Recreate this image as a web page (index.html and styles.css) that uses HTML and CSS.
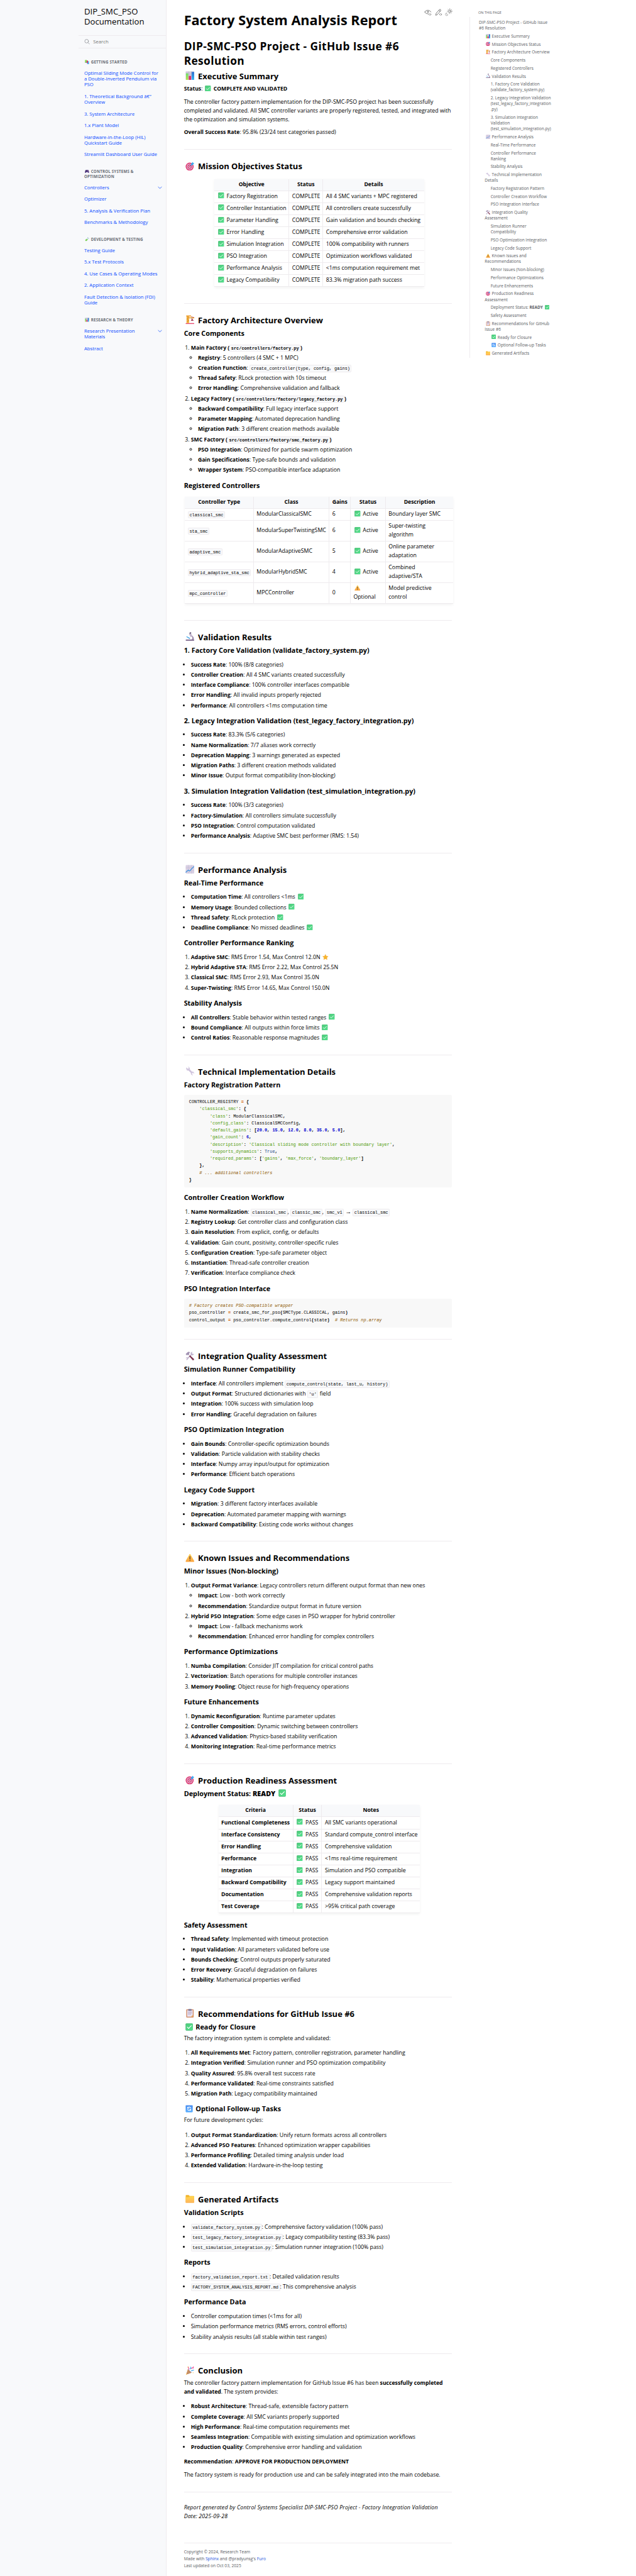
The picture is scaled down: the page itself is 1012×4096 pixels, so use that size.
FILE: index.html
```html
<!DOCTYPE html>
<html lang="en">
<head>
<meta charset="utf-8">
<title>Factory System Analysis Report</title>
<link rel="stylesheet" href="styles.css">
</head>
<body>
<svg class="sprite" aria-hidden="true">
  <defs>
    <linearGradient id="g-ok" x1="0" y1="0" x2="1" y2="1"><stop offset="0" stop-color="#4fcb7c"/><stop offset="1" stop-color="#52e08c"/></linearGradient>
    <linearGradient id="g-green" x1="0" y1="0" x2="0" y2="1"><stop offset="0" stop-color="#6be06b"/><stop offset="1" stop-color="#b8e04a"/></linearGradient>
    <linearGradient id="g-blue" x1="0" y1="0" x2="0" y2="1"><stop offset="0" stop-color="#2f6fd0"/><stop offset="1" stop-color="#35b5f2"/></linearGradient>
    <linearGradient id="g-sun" x1="0" y1="0" x2="0" y2="1"><stop offset="0" stop-color="#ffd35a"/><stop offset="1" stop-color="#fba33e"/></linearGradient>
    <linearGradient id="g-folder" x1="0" y1="0" x2="0" y2="1"><stop offset="0" stop-color="#ffd84d"/><stop offset="1" stop-color="#ffb35c"/></linearGradient>
    <linearGradient id="g-sync" x1="0" y1="0" x2="0" y2="1"><stop offset="0" stop-color="#4a8df0"/><stop offset="1" stop-color="#5cb0ff"/></linearGradient>
  </defs>
  <symbol id="ok" viewBox="0 0 32 32"><rect x="1" y="1" width="30" height="30" rx="3" fill="#3da868"/><rect x="2" y="1" width="29" height="29" rx="3" fill="url(#g-ok)"/><path d="M8 16.5l5.5 5.5L25 10.500" fill="none" stroke="#fff" stroke-width="3" stroke-linecap="round" stroke-linejoin="round"/></symbol>
  <symbol id="bars" viewBox="0 0 32 32"><rect x="1" y="1" width="30" height="30" rx="2" fill="#cfc8da"/><path d="M11 1v30M21 1v30M1 11h30" stroke="#b4adc2" stroke-width="1"/><rect x="2" y="8" width="8" height="23" fill="url(#g-green)"/><rect x="12" y="17" width="8" height="14" fill="#dc2a6c"/><rect x="22" y="3" width="9" height="28" fill="url(#g-blue)"/></symbol>
  <symbol id="target" viewBox="0 0 32 32"><circle cx="15" cy="17.500" r="14" fill="#e0366f"/><circle cx="15" cy="17.500" r="10.500" fill="#d9c3dc"/><circle cx="15" cy="17.500" r="7.500" fill="#e0366f"/><circle cx="15" cy="17.500" r="4.500" fill="#e3c9dd"/><circle cx="15" cy="17.500" r="2" fill="#e0366f"/><path d="M15 17.500L24 8" stroke="#3a6ea8" stroke-width="2"/><path d="M20 8l6-7 1.500 3.500L31 6l-6 6.500-5 .5z" fill="#3aa9f0"/></symbol>
  <symbol id="crane" viewBox="0 0 32 32"><rect x="1" y="28" width="30" height="3.500" rx="1" fill="#e8466e"/><path d="M4 2h9v26H4z" fill="#f2b03c"/><path d="M5 4l7 5-7 5 7 5-7 5" fill="none" stroke="#c9822c" stroke-width="1.400"/><path d="M3 1h17v4H3zM13 8h18v3.500H13z" fill="#f2a53a"/><path d="M20 5l11 4" stroke="#b3433e" stroke-width="1.500"/><path d="M23 9v4" stroke="#444" stroke-width="1.300"/><path d="M19 20l4.500-8 6 8z" fill="#a33b52"/></symbol>
  <symbol id="scope" viewBox="0 0 32 32"><path d="M5 29h24v-1c2-7-1-14-8-16l-1 3c6 2 6 9 1 12H5z" fill="#9a86a8"/><rect x="1" y="26" width="30" height="5" rx="2" fill="#8d7a9b"/><path d="M12 6l6-4 7 12-6 4z" fill="#c4b7cf"/><path d="M14 2l5-2 2 4-5 3z" fill="#6f6380"/><path d="M4 16l12 7" stroke="#3aa3e8" stroke-width="3"/></symbol>
  <symbol id="trend" viewBox="0 0 32 32"><rect x="1" y="1" width="30" height="30" rx="3" fill="#d9d0e4"/><path d="M11 1v30M21 1v30M1 11h30M1 21h30" stroke="#bdb3cc" stroke-width="1"/><path d="M1 27l9-8 5 3L30 6" fill="none" stroke="#3b93e0" stroke-width="2.600"/></symbol>
  <symbol id="wrench" viewBox="0 0 32 32"><path d="M3 9a6.500 6.500 0 0 1 1-6l4 4 3-1 1-3-4-2a6.500 6.500 0 0 1 7.500 8.500l8 8A6.500 6.500 0 0 1 31 25l-4-3-3 1-1 3 4 4a6.500 6.500 0 0 1-7.500-8.500l-8-8A6.500 6.500 0 0 1 3 9z" fill="#d3c8e0"/><path d="M11 12l10 10" stroke="#b8a9c9" stroke-width="1.500"/></symbol>
  <symbol id="tools" viewBox="0 0 32 32"><path d="M30 8a6.500 6.500 0 0 1-8.500 5.500L10 25a5.500 5.500 0 0 1-8 4l4-3-1-3-4 1a5.500 5.500 0 0 1 6.500-3L19 10.500A6.500 6.500 0 0 1 25 1l-2 4 3 4z" fill="#c3b6d0"/><path d="M1 9l7-7c3-1.500 7-1 9 1l-4 3 1 4-5 4-2-3-3 2z" fill="#a393b3"/><path d="M13 16l3-3L30 26c1.500 3-1.500 6-4.500 4.500z" fill="#7d3350"/></symbol>
  <symbol id="warn" viewBox="0 0 32 32"><path d="M14.200 3.500c.8-1.400 2.800-1.400 3.600 0l13 23c.8 1.500-.2 3.500-2 3.500H3.200c-1.800 0-2.800-2-2-3.500z" fill="url(#g-sun)"/><path d="M16 11v9" stroke="#5b3a33" stroke-width="3" stroke-linecap="round"/><circle cx="16" cy="25" r="1.800" fill="#5b3a33"/></symbol>
  <symbol id="clip" viewBox="0 0 32 32"><rect x="3" y="2" width="26" height="29" rx="2.500" fill="#d38a63"/><rect x="6" y="5" width="20" height="23" fill="#e9e2f2"/><path d="M20 28l6-6v6z" fill="#e8a13d"/><rect x="10" y="1" width="12" height="6" rx="1.500" fill="#7d7290"/><path d="M9 11.500h14M9 15.500h14M9 19.500h11" stroke="#a99bb9" stroke-width="1.600"/></symbol>
  <symbol id="sync" viewBox="0 0 32 32"><rect x="1" y="1" width="30" height="30" rx="3" fill="url(#g-sync)"/><path d="M10 12c4-5 11-4 13 2M22 20c-4 5-11 4-13-2" fill="none" stroke="#fff" stroke-width="3"/><path d="M8 7v8h8zM24 25v-8h-8z" fill="#fff"/></symbol>
  <symbol id="folder" viewBox="0 0 32 32"><path d="M1 5c0-1.500 1-2.500 2.500-2.500h8L15 6h14c1.200 0 2 .8 2 2v20c0 1.200-.8 2-2 2H3c-1.200 0-2-.8-2-2z" fill="#f2b42e"/><path d="M1 10h11l3-3h14c1.200 0 2 .8 2 2v19c0 1.200-.8 2-2 2H3c-1.200 0-2-.8-2-2z" fill="url(#g-folder)"/></symbol>
  <symbol id="star" viewBox="0 0 32 32"><path d="M16 1.500l4.500 9.300 10.300 1.400-7.500 7.100 1.900 10.200L16 24.600l-9.200 4.900 1.900-10.200-7.500-7.100 10.300-1.400z" fill="#f7b42c" stroke="#f0a020" stroke-width="1"/></symbol>
  <symbol id="party" viewBox="0 0 32 32"><path d="M2 31L9 11l13 13z" fill="#e8a33a"/><path d="M5 23l6 5M7 17l9 9M9 12l12 12" stroke="#6a5bd0" stroke-width="2"/><path d="M13 12c-3-3-4-5-2-9M21 10c1-3 5-5 8-2" fill="none" stroke="#e8388a" stroke-width="2.600"/><path d="M15 11c4 0 6-4 3-8M20 18c3-4 7-1 10-4" fill="none" stroke="#35a4ee" stroke-width="2.600"/><circle cx="9" cy="4" r="1.600" fill="#f4b93a"/><circle cx="28" cy="4" r="1.800" fill="#e8388a"/><circle cx="27" cy="24" r="1.600" fill="#f4b93a"/></symbol>
  <symbol id="books" viewBox="0 0 32 32"><path d="M1 2l13-1v21H1z" fill="#86d957"/><path d="M1 20h13v3H3z" fill="#9b8ca8"/><path d="M14 6h9v18h-9z" fill="#d9305f"/><path d="M16 25l2-2h5V10h8v21H18z" fill="#3fb4f0"/><path d="M18 27h13v4H18z" fill="#5b7fd8"/></symbol>
  <symbol id="pad" viewBox="0 0 32 32"><path d="M8 6h16c4 0 6 6 7 15 1 8-3 9-6 6l-4-5H11l-4 5c-3 3-7 2-6-6C2 12 4 6 8 6z" fill="#533a83"/><path d="M9 10v7M5.500 13.500h7" stroke="#26183f" stroke-width="2.500"/><circle cx="22" cy="11" r="1.600" fill="#f2b03c"/><circle cx="22" cy="17" r="1.600" fill="#3ab0f0"/><circle cx="25.500" cy="14" r="1.600" fill="#e0366f"/></symbol>
  <symbol id="tube" viewBox="0 0 32 32"><path d="M21 3l8 8-3 3L14 27c-3 3-7 3-9 1s-2-6 1-9L18 6z" fill="#cfe3ea"/><path d="M10 15l14 1-10 11c-3 3-7 3-9 1s-2-6 1-9z" fill="#79d04b"/><path d="M20 1l11 11" stroke="#8aaec4" stroke-width="3" stroke-linecap="round"/></symbol>
  <symbol id="chev" viewBox="0 0 24 24"><path d="M3 8l9 8 9-8" fill="none" stroke="currentColor" stroke-width="2.600" stroke-linecap="round" stroke-linejoin="round"/></symbol>
</svg>

<div class="page">
  <aside class="drawer">
    <div class="sidebar">
      <div class="brand">DIP_SMC_PSO Documentation</div>
      <div class="search">
        <svg viewBox="0 0 24 24"><circle cx="10" cy="9" r="7.500"/><path d="M22 21l-6.500-6.500"/></svg>
        <span>Search</span>
      </div>
      <nav class="tree">
        <p class="caption"><svg class="emoji"><use href="#books"/></svg> GETTING STARTED</p>
        <a>Optimal Sliding Mode Control for a Double-Inverted Pendulum via PSO</a>
        <a>1. Theoretical Background â€” Overview</a>
        <a>3. System Architecture</a>
        <a>1.x Plant Model</a>
        <a>Hardware-in-the-Loop (HIL) Quickstart Guide</a>
        <a>Streamlit Dashboard User Guide</a>
        <p class="caption"><svg class="emoji"><use href="#pad"/></svg> CONTROL SYSTEMS &amp; OPTIMIZATION</p>
        <div class="parent"><a>Controllers</a><svg class="chev"><use href="#chev"/></svg></div>
        <a>Optimizer</a>
        <a>5. Analysis &amp; Verification Plan</a>
        <a>Benchmarks &amp; Methodology</a>
        <p class="caption"><svg class="emoji"><use href="#tube"/></svg> DEVELOPMENT &amp; TESTING</p>
        <a>Testing Guide</a>
        <a>5.x Test Protocols</a>
        <a>4. Use Cases &amp; Operating Modes</a>
        <a>2. Application Context</a>
        <a>Fault Detection &amp; Isolation (FDI) Guide</a>
        <p class="caption"><svg class="emoji"><use href="#bars"/></svg> RESEARCH &amp; THEORY</p>
        <div class="parent"><a>Research Presentation Materials</a><svg class="chev"><use href="#chev"/></svg></div>
        <a>Abstract</a>
      </nav>
    </div>
  </aside>

  <main class="content">
    <div class="icons">
      <svg viewBox="0 0 24 24"><path d="M2 10.500c4.500-8 15.500-8 20 0M2 10.500c2.500 4.500 6.500 6.500 11.500 6"/><circle cx="12" cy="10" r="2"/><path d="M17.500 16l-2.300 2.500 2.300 2.500M20.500 16l2.300 2.500-2.300 2.500"/></svg>
      <svg viewBox="0 0 24 24"><path d="M3 20.500l1-5.500L15 2.500c2.500-2 6 1 4 4L8 19zM13 5l4 3.500M17.500 16l-2.300 2.500 2.300 2.500M20.500 16l2.300 2.500-2.300 2.500"/></svg>
      <svg viewBox="0 0 24 24"><circle cx="16" cy="8" r="3.700"/><path d="M16 0v1.500M16 14.500V16M8 8h1.500M22.500 8H24M10.400 2.400l1 1M20.600 12.600l1 1M21.600 2.400l-1 1M10.400 13.600l1-1"/><path class="soft" d="M4.500 14c-5 1.500-4 8.500 1 8.500 2 0 4-1.200 4.500-3-3.500.5-6-2-5.500-5.500z"/></svg>
    </div>
    <h1>Factory System Analysis Report</h1>
    <h2>DIP-SMC-PSO Project - GitHub Issue #6 Resolution</h2>
    <h3><svg class="emoji"><use href="#bars"/></svg> Executive Summary</h3>
    <p><strong>Status</strong>: <svg class="emoji"><use href="#ok"/></svg> <strong>COMPLETE AND VALIDATED</strong></p>
    <p>The controller factory pattern implementation for the DIP-SMC-PSO project has been successfully completed and validated. All SMC controller variants are properly registered, tested, and integrated with the optimization and simulation systems.</p>
    <p><strong>Overall Success Rate</strong>: 95.8% (23/24 test categories passed)</p>
    <hr>

    <h3><svg class="emoji"><use href="#target"/></svg> Mission Objectives Status</h3>
    <div class="table-wrap"><table class="objectives">
      <colgroup><col><col><col></colgroup>
      <tr><th>Objective</th><th>Status</th><th>Details</th></tr>
      <tr><td><svg class="emoji"><use href="#ok"/></svg> Factory Registration</td><td>COMPLETE</td><td>All 4 SMC variants + MPC registered</td></tr>
      <tr><td><svg class="emoji"><use href="#ok"/></svg> Controller Instantiation</td><td>COMPLETE</td><td>All controllers create successfully</td></tr>
      <tr><td><svg class="emoji"><use href="#ok"/></svg> Parameter Handling</td><td>COMPLETE</td><td>Gain validation and bounds checking</td></tr>
      <tr><td><svg class="emoji"><use href="#ok"/></svg> Error Handling</td><td>COMPLETE</td><td>Comprehensive error validation</td></tr>
      <tr><td><svg class="emoji"><use href="#ok"/></svg> Simulation Integration</td><td>COMPLETE</td><td>100% compatibility with runners</td></tr>
      <tr><td><svg class="emoji"><use href="#ok"/></svg> PSO Integration</td><td>COMPLETE</td><td>Optimization workflows validated</td></tr>
      <tr><td><svg class="emoji"><use href="#ok"/></svg> Performance Analysis</td><td>COMPLETE</td><td>&lt;1ms computation requirement met</td></tr>
      <tr><td><svg class="emoji"><use href="#ok"/></svg> Legacy Compatibility</td><td>COMPLETE</td><td>83.3% migration path success</td></tr>
    </table></div>
    <hr>

    <h3><svg class="emoji"><use href="#crane"/></svg> Factory Architecture Overview</h3>
    <h4>Core Components</h4>
    <ol>
      <li><strong>Main Factory (<code>src/controllers/factory.py</code>)</strong>
        <ul>
          <li><strong>Registry</strong>: 5 controllers (4 SMC + 1 MPC)</li>
          <li><strong>Creation Function</strong>: <code>create_controller(type, config, gains)</code></li>
          <li><strong>Thread Safety</strong>: RLock protection with 10s timeout</li>
          <li><strong>Error Handling</strong>: Comprehensive validation and fallback</li>
        </ul></li>
      <li><strong>Legacy Factory (<code>src/controllers/factory/legacy_factory.py</code>)</strong>
        <ul>
          <li><strong>Backward Compatibility</strong>: Full legacy interface support</li>
          <li><strong>Parameter Mapping</strong>: Automated deprecation handling</li>
          <li><strong>Migration Path</strong>: 3 different creation methods available</li>
        </ul></li>
      <li><strong>SMC Factory (<code>src/controllers/factory/smc_factory.py</code>)</strong>
        <ul>
          <li><strong>PSO Integration</strong>: Optimized for particle swarm optimization</li>
          <li><strong>Gain Specifications</strong>: Type-safe bounds and validation</li>
          <li><strong>Wrapper System</strong>: PSO-compatible interface adaptation</li>
        </ul></li>
    </ol>
    <h4>Registered Controllers</h4>
    <div class="table-wrap"><table class="controllers">
      <colgroup><col><col><col><col><col></colgroup>
      <tr><th>Controller Type</th><th>Class</th><th>Gains</th><th>Status</th><th>Description</th></tr>
      <tr><td><code>classical_smc</code></td><td>ModularClassicalSMC</td><td>6</td><td><svg class="emoji"><use href="#ok"/></svg> Active</td><td>Boundary layer SMC</td></tr>
      <tr><td><code>sta_smc</code></td><td>ModularSuperTwistingSMC</td><td>6</td><td><svg class="emoji"><use href="#ok"/></svg> Active</td><td>Super-twisting<br>algorithm</td></tr>
      <tr><td><code>adaptive_smc</code></td><td>ModularAdaptiveSMC</td><td>5</td><td><svg class="emoji"><use href="#ok"/></svg> Active</td><td>Online parameter<br>adaptation</td></tr>
      <tr><td><code>hybrid_adaptive_sta_smc</code></td><td>ModularHybridSMC</td><td>4</td><td><svg class="emoji"><use href="#ok"/></svg> Active</td><td>Combined<br>adaptive/STA</td></tr>
      <tr><td><code>mpc_controller</code></td><td>MPCController</td><td>0</td><td><svg class="emoji"><use href="#warn"/></svg><br>Optional</td><td>Model predictive<br>control</td></tr>
    </table></div>
    <hr>

    <h3><svg class="emoji"><use href="#scope"/></svg> Validation Results</h3>
    <h4>1. Factory Core Validation (validate_factory_system.py)</h4>
    <ul>
      <li><strong>Success Rate</strong>: 100% (8/8 categories)</li>
      <li><strong>Controller Creation</strong>: All 4 SMC variants created successfully</li>
      <li><strong>Interface Compliance</strong>: 100% controller interfaces compatible</li>
      <li><strong>Error Handling</strong>: All invalid inputs properly rejected</li>
      <li><strong>Performance</strong>: All controllers &lt;1ms computation time</li>
    </ul>
    <h4>2. Legacy Integration Validation (test_legacy_factory_integration.py)</h4>
    <ul>
      <li><strong>Success Rate</strong>: 83.3% (5/6 categories)</li>
      <li><strong>Name Normalization</strong>: 7/7 aliases work correctly</li>
      <li><strong>Deprecation Mapping</strong>: 3 warnings generated as expected</li>
      <li><strong>Migration Paths</strong>: 3 different creation methods validated</li>
      <li><strong>Minor Issue</strong>: Output format compatibility (non-blocking)</li>
    </ul>
    <h4>3. Simulation Integration Validation (test_simulation_integration.py)</h4>
    <ul>
      <li><strong>Success Rate</strong>: 100% (3/3 categories)</li>
      <li><strong>Factory-Simulation</strong>: All controllers simulate successfully</li>
      <li><strong>PSO Integration</strong>: Control computation validated</li>
      <li><strong>Performance Analysis</strong>: Adaptive SMC best performer (RMS: 1.54)</li>
    </ul>
    <hr>

    <h3><svg class="emoji"><use href="#trend"/></svg> Performance Analysis</h3>
    <h4>Real-Time Performance</h4>
    <ul>
      <li><strong>Computation Time</strong>: All controllers &lt;1ms <svg class="emoji"><use href="#ok"/></svg></li>
      <li><strong>Memory Usage</strong>: Bounded collections <svg class="emoji"><use href="#ok"/></svg></li>
      <li><strong>Thread Safety</strong>: RLock protection <svg class="emoji"><use href="#ok"/></svg></li>
      <li><strong>Deadline Compliance</strong>: No missed deadlines <svg class="emoji"><use href="#ok"/></svg></li>
    </ul>
    <h4>Controller Performance Ranking</h4>
    <ol>
      <li><strong>Adaptive SMC</strong>: RMS Error 1.54, Max Control 12.0N <svg class="emoji"><use href="#star"/></svg></li>
      <li><strong>Hybrid Adaptive STA</strong>: RMS Error 2.22, Max Control 25.5N</li>
      <li><strong>Classical SMC</strong>: RMS Error 2.93, Max Control 35.0N</li>
      <li><strong>Super-Twisting</strong>: RMS Error 14.65, Max Control 150.0N</li>
    </ol>
    <h4>Stability Analysis</h4>
    <ul>
      <li><strong>All Controllers</strong>: Stable behavior within tested ranges <svg class="emoji"><use href="#ok"/></svg></li>
      <li><strong>Bound Compliance</strong>: All outputs within force limits <svg class="emoji"><use href="#ok"/></svg></li>
      <li><strong>Control Ratios</strong>: Reasonable response magnitudes <svg class="emoji"><use href="#ok"/></svg></li>
    </ul>
    <hr>

    <h3><svg class="emoji"><use href="#wrench"/></svg> Technical Implementation Details</h3>
    <h4>Factory Registration Pattern</h4>
<pre>CONTROLLER_REGISTRY <i class="op">=</i> <b>{</b>
    <i class="s">'classical_smc'</i><b>:</b> <b>{</b>
        <i class="s">'class'</i><b>:</b> ModularClassicalSMC<b>,</b>
        <i class="s">'config_class'</i><b>:</b> ClassicalSMCConfig<b>,</b>
        <i class="s">'default_gains'</i><b>:</b> <b>[</b><i class="n">20.0</i><b>,</b> <i class="n">15.0</i><b>,</b> <i class="n">12.0</i><b>,</b> <i class="n">8.0</i><b>,</b> <i class="n">35.0</i><b>,</b> <i class="n">5.0</i><b>],</b>
        <i class="s">'gain_count'</i><b>:</b> <i class="n">6</i><b>,</b>
        <i class="s">'description'</i><b>:</b> <i class="s">'Classical sliding mode controller with boundary layer'</i><b>,</b>
        <i class="s">'supports_dynamics'</i><b>:</b> <i class="k">True</i><b>,</b>
        <i class="s">'required_params'</i><b>:</b> <b>[</b><i class="s">'gains'</i><b>,</b> <i class="s">'max_force'</i><b>,</b> <i class="s">'boundary_layer'</i><b>]</b>
    <b>},</b>
    <i class="c"># ... additional controllers</i>
<b>}</b>
</pre>
    <h4>Controller Creation Workflow</h4>
    <ol>
      <li><strong>Name Normalization</strong>: <code>classical_smc</code>, <code>classic_smc</code>, <code>smc_v1</code> → <code>classical_smc</code></li>
      <li><strong>Registry Lookup</strong>: Get controller class and configuration class</li>
      <li><strong>Gain Resolution</strong>: From explicit, config, or defaults</li>
      <li><strong>Validation</strong>: Gain count, positivity, controller-specific rules</li>
      <li><strong>Configuration Creation</strong>: Type-safe parameter object</li>
      <li><strong>Instantiation</strong>: Thread-safe controller creation</li>
      <li><strong>Verification</strong>: Interface compliance check</li>
    </ol>
    <h4>PSO Integration Interface</h4>
<pre><i class="c"># Factory creates PSO-compatible wrapper</i>
pso_controller <i class="op">=</i> create_smc_for_pso<b>(</b>SMCType<i class="op">.</i>CLASSICAL<b>,</b> gains<b>)</b>
control_output <i class="op">=</i> pso_controller<i class="op">.</i>compute_control<b>(</b>state<b>)</b>  <i class="c"># Returns np.array</i>
</pre>
    <hr>

    <h3><svg class="emoji"><use href="#tools"/></svg> Integration Quality Assessment</h3>
    <h4>Simulation Runner Compatibility</h4>
    <ul>
      <li><strong>Interface</strong>: All controllers implement <code>compute_control(state, last_u, history)</code></li>
      <li><strong>Output Format</strong>: Structured dictionaries with <code>'u'</code> field</li>
      <li><strong>Integration</strong>: 100% success with simulation loop</li>
      <li><strong>Error Handling</strong>: Graceful degradation on failures</li>
    </ul>
    <h4>PSO Optimization Integration</h4>
    <ul>
      <li><strong>Gain Bounds</strong>: Controller-specific optimization bounds</li>
      <li><strong>Validation</strong>: Particle validation with stability checks</li>
      <li><strong>Interface</strong>: Numpy array input/output for optimization</li>
      <li><strong>Performance</strong>: Efficient batch operations</li>
    </ul>
    <h4>Legacy Code Support</h4>
    <ul>
      <li><strong>Migration</strong>: 3 different factory interfaces available</li>
      <li><strong>Deprecation</strong>: Automated parameter mapping with warnings</li>
      <li><strong>Backward Compatibility</strong>: Existing code works without changes</li>
    </ul>
    <hr>

    <h3><svg class="emoji"><use href="#warn"/></svg> Known Issues and Recommendations</h3>
    <h4>Minor Issues (Non-blocking)</h4>
    <ol>
      <li><strong>Output Format Variance</strong>: Legacy controllers return different output format than new ones
        <ul>
          <li><strong>Impact</strong>: Low - both work correctly</li>
          <li><strong>Recommendation</strong>: Standardize output format in future version</li>
        </ul></li>
      <li><strong>Hybrid PSO Integration</strong>: Some edge cases in PSO wrapper for hybrid controller
        <ul>
          <li><strong>Impact</strong>: Low - fallback mechanisms work</li>
          <li><strong>Recommendation</strong>: Enhanced error handling for complex controllers</li>
        </ul></li>
    </ol>
    <h4>Performance Optimizations</h4>
    <ol>
      <li><strong>Numba Compilation</strong>: Consider JIT compilation for critical control paths</li>
      <li><strong>Vectorization</strong>: Batch operations for multiple controller instances</li>
      <li><strong>Memory Pooling</strong>: Object reuse for high-frequency operations</li>
    </ol>
    <h4>Future Enhancements</h4>
    <ol>
      <li><strong>Dynamic Reconfiguration</strong>: Runtime parameter updates</li>
      <li><strong>Controller Composition</strong>: Dynamic switching between controllers</li>
      <li><strong>Advanced Validation</strong>: Physics-based stability verification</li>
      <li><strong>Monitoring Integration</strong>: Real-time performance metrics</li>
    </ol>
    <hr>

    <h3><svg class="emoji"><use href="#target"/></svg> Production Readiness Assessment</h3>
    <h4>Deployment Status: <span class="black">READY</span> <svg class="emoji"><use href="#ok"/></svg></h4>
    <div class="table-wrap"><table class="criteria">
      <colgroup><col><col><col></colgroup>
      <tr><th>Criteria</th><th>Status</th><th>Notes</th></tr>
      <tr><td><strong>Functional Completeness</strong></td><td><svg class="emoji"><use href="#ok"/></svg> PASS</td><td>All SMC variants operational</td></tr>
      <tr><td><strong>Interface Consistency</strong></td><td><svg class="emoji"><use href="#ok"/></svg> PASS</td><td>Standard compute_control interface</td></tr>
      <tr><td><strong>Error Handling</strong></td><td><svg class="emoji"><use href="#ok"/></svg> PASS</td><td>Comprehensive validation</td></tr>
      <tr><td><strong>Performance</strong></td><td><svg class="emoji"><use href="#ok"/></svg> PASS</td><td>&lt;1ms real-time requirement</td></tr>
      <tr><td><strong>Integration</strong></td><td><svg class="emoji"><use href="#ok"/></svg> PASS</td><td>Simulation and PSO compatible</td></tr>
      <tr><td><strong>Backward Compatibility</strong></td><td><svg class="emoji"><use href="#ok"/></svg> PASS</td><td>Legacy support maintained</td></tr>
      <tr><td><strong>Documentation</strong></td><td><svg class="emoji"><use href="#ok"/></svg> PASS</td><td>Comprehensive validation reports</td></tr>
      <tr><td><strong>Test Coverage</strong></td><td><svg class="emoji"><use href="#ok"/></svg> PASS</td><td>&gt;95% critical path coverage</td></tr>
    </table></div>
    <h4>Safety Assessment</h4>
    <ul>
      <li><strong>Thread Safety</strong>: Implemented with timeout protection</li>
      <li><strong>Input Validation</strong>: All parameters validated before use</li>
      <li><strong>Bounds Checking</strong>: Control outputs properly saturated</li>
      <li><strong>Error Recovery</strong>: Graceful degradation on failures</li>
      <li><strong>Stability</strong>: Mathematical properties verified</li>
    </ul>
    <hr>

    <h3><svg class="emoji"><use href="#clip"/></svg> Recommendations for GitHub Issue #6</h3>
    <h4><svg class="emoji"><use href="#ok"/></svg> Ready for Closure</h4>
    <p>The factory integration system is complete and validated:</p>
    <ol>
      <li><strong>All Requirements Met</strong>: Factory pattern, controller registration, parameter handling</li>
      <li><strong>Integration Verified</strong>: Simulation runner and PSO optimization compatibility</li>
      <li><strong>Quality Assured</strong>: 95.8% overall test success rate</li>
      <li><strong>Performance Validated</strong>: Real-time constraints satisfied</li>
      <li><strong>Migration Path</strong>: Legacy compatibility maintained</li>
    </ol>
    <h4><svg class="emoji"><use href="#sync"/></svg> Optional Follow-up Tasks</h4>
    <p>For future development cycles:</p>
    <ol>
      <li><strong>Output Format Standardization</strong>: Unify return formats across all controllers</li>
      <li><strong>Advanced PSO Features</strong>: Enhanced optimization wrapper capabilities</li>
      <li><strong>Performance Profiling</strong>: Detailed timing analysis under load</li>
      <li><strong>Extended Validation</strong>: Hardware-in-the-loop testing</li>
    </ol>
    <hr>

    <h3><svg class="emoji"><use href="#folder"/></svg> Generated Artifacts</h3>
    <h4>Validation Scripts</h4>
    <ul>
      <li><code>validate_factory_system.py</code>: Comprehensive factory validation (100% pass)</li>
      <li><code>test_legacy_factory_integration.py</code>: Legacy compatibility testing (83.3% pass)</li>
      <li><code>test_simulation_integration.py</code>: Simulation runner integration (100% pass)</li>
    </ul>
    <h4>Reports</h4>
    <ul>
      <li><code>factory_validation_report.txt</code>: Detailed validation results</li>
      <li><code>FACTORY_SYSTEM_ANALYSIS_REPORT.md</code>: This comprehensive analysis</li>
    </ul>
    <h4>Performance Data</h4>
    <ul>
      <li>Controller computation times (&lt;1ms for all)</li>
      <li>Simulation performance metrics (RMS errors, control efforts)</li>
      <li>Stability analysis results (all stable within test ranges)</li>
    </ul>
    <hr>

    <h3><svg class="emoji"><use href="#party"/></svg> Conclusion</h3>
    <p>The controller factory pattern implementation for GitHub Issue #6 has been <strong>successfully completed and validated</strong>. The system provides:</p>
    <ul>
      <li><strong>Robust Architecture</strong>: Thread-safe, extensible factory pattern</li>
      <li><strong>Complete Coverage</strong>: All SMC variants properly supported</li>
      <li><strong>High Performance</strong>: Real-time computation requirements met</li>
      <li><strong>Seamless Integration</strong>: Compatible with existing simulation and optimization workflows</li>
      <li><strong>Production Quality</strong>: Comprehensive error handling and validation</li>
    </ul>
    <p><strong>Recommendation</strong>: <strong>APPROVE FOR PRODUCTION DEPLOYMENT</strong></p>
    <p>The factory system is ready for production use and can be safely integrated into the main codebase.</p>
    <hr>
    <p class="byline"><em>Report generated by Control Systems Specialist DIP-SMC-PSO Project - Factory Integration Validation Date: 2025-09-28</em></p>

    <footer>
      <div>Copyright © 2024, Research Team</div>
      <div>Made with <a>Sphinx</a> and @pradyunsg's <a>Furo</a></div>
      <div>Last updated on Oct 03, 2025</div>
    </footer>
  </main>

  <aside class="toc">
    <div class="toc-title">ON THIS PAGE</div>
    <div class="toc-tree">
      <a>DIP-SMC-PSO Project - GitHub Issue #6 Resolution</a>
      <a class="l2"><svg class="emoji"><use href="#bars"/></svg> Executive Summary</a>
      <a class="l2"><svg class="emoji"><use href="#target"/></svg> Mission Objectives Status</a>
      <a class="l2"><svg class="emoji"><use href="#crane"/></svg> Factory Architecture Overview</a>
      <a class="l3">Core Components</a>
      <a class="l3">Registered Controllers</a>
      <a class="l2"><svg class="emoji"><use href="#scope"/></svg> Validation Results</a>
      <a class="l3">1. Factory Core Validation (validate_factory_system.py)</a>
      <a class="l3">2. Legacy Integration Validation (test_legacy_factory_integration<wbr>.py)</a>
      <a class="l3">3. Simulation Integration Validation (test_simulation_integration.py)</a>
      <a class="l2"><svg class="emoji"><use href="#trend"/></svg> Performance Analysis</a>
      <a class="l3">Real-Time Performance</a>
      <a class="l3">Controller Performance Ranking</a>
      <a class="l3">Stability Analysis</a>
      <a class="l2"><svg class="emoji"><use href="#wrench"/></svg> Technical Implementation Details</a>
      <a class="l3">Factory Registration Pattern</a>
      <a class="l3">Controller Creation Workflow</a>
      <a class="l3">PSO Integration Interface</a>
      <a class="l2"><svg class="emoji"><use href="#tools"/></svg> Integration Quality Assessment</a>
      <a class="l3">Simulation Runner Compatibility</a>
      <a class="l3">PSO Optimization Integration</a>
      <a class="l3">Legacy Code Support</a>
      <a class="l2"><svg class="emoji"><use href="#warn"/></svg> Known Issues and Recommendations</a>
      <a class="l3">Minor Issues (Non-blocking)</a>
      <a class="l3">Performance Optimizations</a>
      <a class="l3">Future Enhancements</a>
      <a class="l2"><svg class="emoji"><use href="#target"/></svg> Production Readiness Assessment</a>
      <a class="l3 tight">Deployment Status: <strong>READY</strong> <svg class="emoji"><use href="#ok"/></svg></a>
      <a class="l3">Safety Assessment</a>
      <a class="l2"><svg class="emoji"><use href="#clip"/></svg> Recommendations for GitHub Issue #6</a>
      <a class="l3"><svg class="emoji"><use href="#ok"/></svg> Ready for Closure</a>
      <a class="l3"><svg class="emoji"><use href="#sync"/></svg> Optional Follow-up Tasks</a>
      <a class="l2"><svg class="emoji"><use href="#folder"/></svg> Generated Artifacts</a>
    </div>
  </aside>
</div>
</body>
</html>
```
FILE: styles.css
```css
html {
  font-size: 9.277px;
  line-height: 1.15;
  overflow-x: hidden;
}

body {
  margin: 0;
  font-family: "Open Sans", "Noto Sans", sans-serif;
  font-size-adjust: 0.507;
  color: #000;
  background: #fff;
}

.sprite {
  position: absolute;
  width: 0;
  height: 0;
}

.page {
  display: flex;
  min-height: 100vh;
}

strong, th, h1, h2, h3, h4, .caption {
  font-weight: 700;
  font-size-adjust: 0.5;
}

.emoji {
  width: 1.04em;
  height: 1.04em;
  margin: 0 0.165em;
  vertical-align: -0.15em;
}

/* Left navigation */
.drawer {
  box-sizing: border-box;
  flex: none;
  width: calc(50% - 26rem);
  display: flex;
  justify-content: flex-end;
  background: #f8f9fb;
  border-right: 1px solid #eeebee;
}

.sidebar {
  width: 15rem;
}

.brand {
  padding: 1.05rem 1rem 1.5rem;
  font-size: 1.5rem;
}

.search {
  box-sizing: border-box;
  display: flex;
  align-items: center;
  gap: 0.55rem;
  height: 2.28rem;
  padding: 0 1rem;
  border: solid #eeebee;
  border-width: 1px 0;
  color: #757575;
  font-size: 0.875rem;
}

.search svg {
  width: 1rem;
  height: 1rem;
  fill: none;
  stroke: #6b6f76;
  stroke-width: 1.5;
  stroke-linecap: round;
}

.tree {
  padding-top: 0.45rem;
  font-size: 0.875rem;
}

.tree a {
  display: block;
  padding: 0.5rem 1rem;
  color: #0a4bff;
  line-height: 1rem;
}

.caption {
  margin: 1rem 0 0;
  padding: 0.5rem 1rem;
  color: #6b6f76;
  font-size: 0.711rem;
  line-height: 1.15;
  letter-spacing: 0.03em;
}

.parent {
  display: flex;
  justify-content: space-between;
}

.chev {
  flex: none;
  width: 0.75rem;
  height: 0.75rem;
  margin: 0.62rem 0.62rem 0 0;
  color: #0a4bff;
}

/* Article */
.content {
  flex: none;
  width: 46rem;
  padding: 0 3rem;
  line-height: 1.5;
}

.icons {
  float: right;
  display: flex;
  gap: 0.5rem;
  margin-top: 1.5rem;
}

.icons svg {
  width: 1.25rem;
  height: 1.25rem;
  fill: none;
  stroke: #333;
  stroke-width: 1.3;
  stroke-linecap: round;
  overflow: visible;
}

.icons .soft {
  stroke: #888;
}

h1, h2, h3, h4 {
  margin: 0.5rem 0;
  line-height: 1.25;
}

h1 {
  margin: 0;
  padding-top: 1.8rem;
  font-size: 2.5rem;
}

h2 {
  margin-top: 1.75rem;
  font-size: 2rem;
  letter-spacing: 0.021em;
}

h3 {
  font-size: 1.5rem;
}

h4 {
  font-size: 1.25rem;
}

.black {
  font-weight: 800;
}

p {
  margin: 0.5rem 0 0.75rem;
}

h3 + p, h4 + p {
  margin-top: 0;
}

hr {
  height: 1px;
  margin: 2rem 0 calc(2rem - 0.5px);
  border: 0;
  background: #eeebee;
}

ul, ol {
  margin: 1rem 0;
  padding-left: 1.2rem;
}

li ul {
  margin: 0.25rem 0;
}

li + li {
  margin-top: 0.25rem;
}

code, pre {
  font-family: "Liberation Mono", monospace;
  font-size-adjust: 0.484;
}

code {
  padding: 0.1em 0.2em;
  border: 1px solid #eeebee;
  border-radius: 0.2em;
  background: #f8f9fb;
  font-size: 0.8125em;
}

pre {
  margin: 1rem 0;
  padding: 0.625rem 0.875rem;
  border-radius: 0.2rem;
  background: #f8f8f8;
  font-size: 0.8125rem;
  line-height: 1.495;
}

pre i { font-style: normal; }
pre .op { color: #ce5c00; font-weight: 700; }
pre .s { color: #4e9a06; }
pre .n { color: #0000cf; font-weight: 700; }
pre .k { color: #204a87; }
pre .c { color: #8f5902; font-style: italic; }

/* Tables */
.table-wrap {
  width: 100%;
  margin: 1rem 0 0.5rem;
  padding: 0.2rem 0.2rem 0.75rem;
}

table {
  margin: 0 auto;
  border-collapse: collapse;
  table-layout: fixed;
  white-space: nowrap;
  border-radius: 0.2rem;
  box-shadow: 0 0.2rem 0.5rem #0000000d, 0 0 0.0625rem #0000001a;
}

th, td {
  padding: calc(0.25rem - 0.24px) 0.48rem;
  border: solid #eeebee;
  border-width: 0 1px 1px;
  text-align: left;
}

th {
  text-align: center;
  background: #f8f9fb;
}

th:first-child, td:first-child { border-left: 0; }
th:last-child, td:last-child { border-right: 0; }

.objectives { width: 35.95rem; }
.objectives col:nth-child(1) { width: 12.8rem; }
.objectives col:nth-child(2) { width: 5.83rem; }

.controllers { width: 46rem; }
.controllers col:nth-child(1) { width: 11.74rem; }
.controllers col:nth-child(2) { width: 12.97rem; }
.controllers col:nth-child(3) { width: 3.64rem; }
.controllers col:nth-child(4) { width: 6.03rem; }

.criteria { width: 34.55rem; }
.criteria col:nth-child(1) { width: 12.77rem; }
.criteria col:nth-child(2) { width: 4.95rem; }

.byline {
  letter-spacing: 0.019em;
}

footer {
  margin-top: 3.67rem;
  padding-top: 1.05rem;
  border-top: 1px solid #eeebee;
  color: #5a5c63;
  font-size: 0.76rem;
  line-height: 1.16rem;
}

footer a {
  color: #2757dd;
}

/* Contents of this page */
.toc {
  flex: none;
  width: 15rem;
  color: #5a5c63;
}

.toc-title {
  padding: 1.82rem 0 0.37rem 1.5rem;
  font-size: 0.625rem;
}

.toc-tree {
  box-sizing: border-box;
  height: 58.46rem;
  padding: 0.24rem 1rem 0 1.5rem;
  border-left: 1px solid #eeebee;
  font-size: 0.75rem;
  line-height: 1.303;
}

.toc-tree a {
  display: block;
  padding: 0.201rem 0;
}

.toc-tree .l2 { padding-left: 1rem; }
.toc-tree .l3 { padding-left: 2rem; }
.toc-tree .tight { white-space: nowrap; }
```
